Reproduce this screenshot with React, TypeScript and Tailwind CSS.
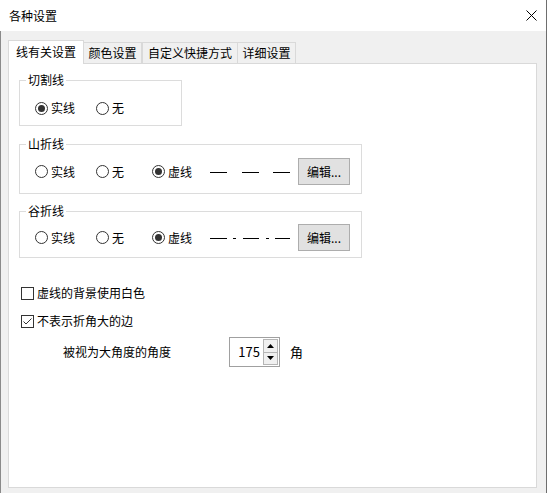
import React from "react";

const font = { fontFamily: '"Noto Sans CJK SC", "Noto Sans", sans-serif' };

const Radio = ({ label, checked, width }: { label: string; checked?: boolean; width: string }) => {
    return (
        <span className={`flex items-center ${width}`}>
            <span className="w-[13px] h-[13px] rounded-full border border-[#333333] bg-white flex items-center justify-center">
                {checked && <span className="w-[7px] h-[7px] rounded-full bg-[#333333]" />}
            </span>
            <span className="ml-[3px]">{label}</span>
        </span>
    );
};

const Check = ({ label, checked }: { label: string; checked?: boolean }) => {
    return (
        <div className="flex items-center h-[16px] ml-[12px]">
            <span className="w-[13px] h-[13px] border border-[#333333] bg-white flex items-center justify-center">
                {checked && (
                    <svg width="11" height="11" viewBox="0 0 11 11">
                        <path d="M1.5 5.5 L4 8 L9.5 2.5" fill="none" stroke="#333333" strokeWidth="1" />
                    </svg>
                )}
            </span>
            <span className="ml-[3px]">{label}</span>
        </div>
    );
};

const Dashes = ({ dots }: { dots?: boolean }) => {
    const segs = dots
        ? [[0, 17], [23, 26], [33, 49], [56, 59], [65, 80]]
        : [[0, 17], [32, 49], [63, 80]];
    return (
        <svg width="81" height="16" viewBox="0 0 81 16">
            {segs.map(([a, b], i) => (
                <line key={i} x1={a} y1="8.5" x2={b} y2="8.5" stroke="#000" strokeWidth="1" />
            ))}
        </svg>
    );
};

const EditButton = () => (
    <button className="ml-[7px] w-[52px] h-[27px] bg-[#e1e1e1] border border-[#adadad] text-[12px] leading-[16px] text-black">
        编辑...
    </button>
);

const Tab = ({ label, className }: { label: string; className: string }) => (
    <div className={`h-[21px] flex items-center justify-center border-[#d9d9d9] bg-[#f0f0f0] ${className}`}>
        {label}
    </div>
);

const App = () => {
    return (
        <div
            className="w-[547px] h-[493px] flex flex-col bg-white border-r border-[#6e6e6e] overflow-hidden text-[12px] leading-[16px] text-black"
            style={font}
        >
            <div className="h-[31px] flex items-center justify-between pl-[9px] pr-[9px] bg-white">
                <span>各种设置</span>
                <svg width="11" height="11" viewBox="0 0 11 11">
                    <path d="M0.5 0.5 L10.5 10.5 M10.5 0.5 L0.5 10.5" stroke="#000" strokeWidth="1" />
                </svg>
            </div>

            <div className="flex-1 flex flex-col bg-[#f0f0f0] border-l border-[#8a8a8a] pl-[7px] pr-[9px] pt-[9px] pb-[5px]">
                <div className="flex items-end h-[23px]">
                    <div className="relative z-10 w-[76px] h-[24px] -mb-px flex items-center justify-center bg-white border-t border-l border-r border-[#d9d9d9] pb-[2px]">
                        线有关设置
                    </div>
                    <Tab label="颜色设置" className="w-[58px] border-t border-r" />
                    <Tab label="自定义快捷方式" className="w-[96px] border-t border-r border-l" />
                    <Tab label="详细设置" className="w-[58px] border-t border-r" />
                </div>

                <div className="flex-1 flex flex-col bg-white border border-[#d9d9d9]">
                    <fieldset className="ml-[10px] mt-[8px] w-[163px] border border-[#dcdcdc] pt-[12px] pb-[9px]">
                        <legend className="ml-[6px] px-[2px]">切割线</legend>
                        <div className="flex items-center h-[16px] pl-[15px]">
                            <Radio label="实线" checked width="w-[61px]" />
                            <Radio label="无" width="w-[56px]" />
                        </div>
                    </fieldset>

                    <fieldset className="ml-[10px] mt-[10px] w-[343px] border border-[#dcdcdc] pt-[6px] pb-[8px]">
                        <legend className="ml-[6px] px-[2px]">山折线</legend>
                        <div className="flex items-center h-[27px] pl-[15px]">
                            <Radio label="实线" width="w-[61px]" />
                            <Radio label="无" width="w-[56px]" />
                            <Radio label="虚线" checked width="w-[58px]" />
                            <Dashes />
                            <EditButton />
                        </div>
                    </fieldset>

                    <fieldset className="ml-[10px] mt-[9px] w-[343px] border border-[#dcdcdc] pt-[5px] pb-[6px]">
                        <legend className="ml-[6px] px-[2px]">谷折线</legend>
                        <div className="flex items-center h-[27px] pl-[15px]">
                            <Radio label="实线" width="w-[61px]" />
                            <Radio label="无" width="w-[56px]" />
                            <Radio label="虚线" checked width="w-[58px]" />
                            <Dashes dots />
                            <EditButton />
                        </div>
                    </fieldset>

                    <div className="mt-[27px]">
                        <Check label="虚线的背景使用白色" />
                    </div>
                    <div className="mt-[12px]">
                        <Check label="不表示折角大的边" checked />
                    </div>

                    <div className="mt-[8px] ml-[54px] flex items-center h-[30px]">
                        <span className="w-[166px]">被视为大角度的角度</span>
                        <div className="w-[51px] h-[30px] flex border border-[#a0a0a0] bg-white">
                            <span className="flex-1 flex items-center justify-end pr-[3px] text-[13px]">175</span>
                            <div className="w-[16px] flex flex-col py-[1px] pr-[1px]">
                                <div className="flex-1 flex items-center justify-center bg-[#f0f0f0] border border-[#b5b5b5]">
                                    <svg width="7" height="4" viewBox="0 0 7 4">
                                        <path d="M3.5 0 L7 4 L0 4 Z" fill="#000" />
                                    </svg>
                                </div>
                                <div className="flex-1 flex items-center justify-center bg-[#f0f0f0] border border-[#b5b5b5] border-t-0">
                                    <svg width="7" height="4" viewBox="0 0 7 4">
                                        <path d="M0 0 L7 0 L3.5 4 Z" fill="#000" />
                                    </svg>
                                </div>
                            </div>
                        </div>
                        <span className="ml-[10px] text-[13px]">角</span>
                    </div>
                </div>
            </div>
        </div>
    );
};

export default App;
